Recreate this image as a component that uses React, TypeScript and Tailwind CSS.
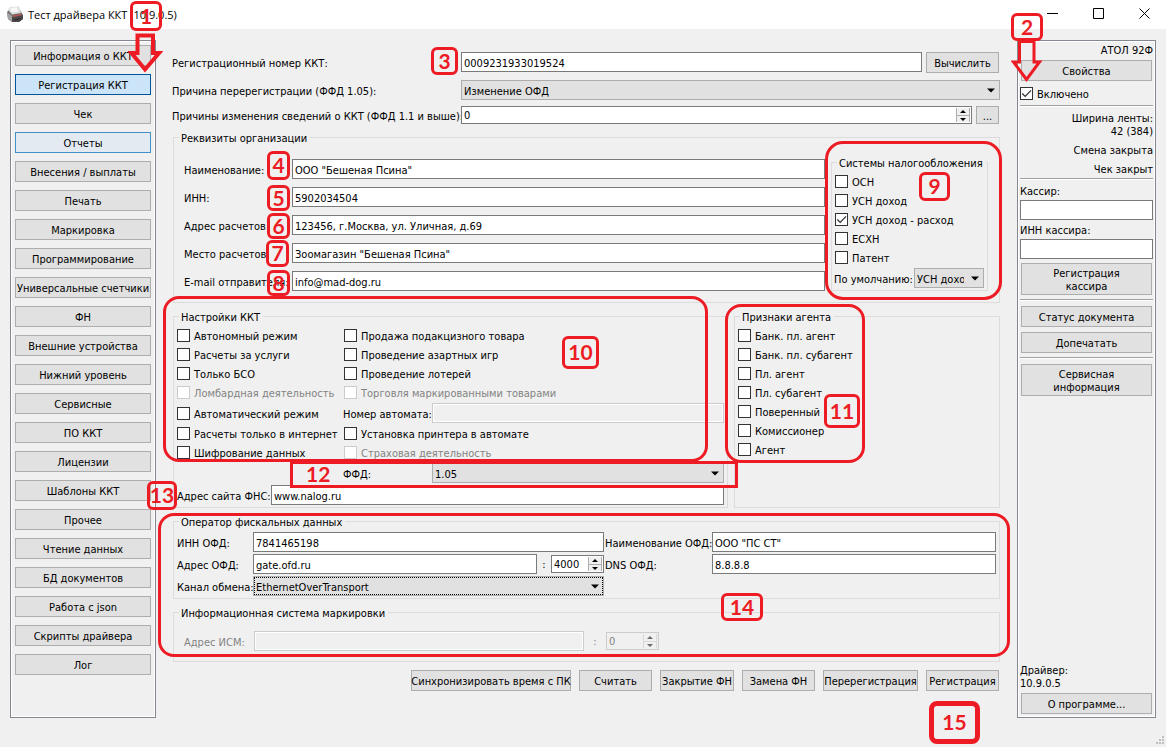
import React from 'react'
import clsx from 'clsx'

type BtnProps = { children: React.ReactNode; className?: string; tone?: 'plain' | 'active' | 'hover' }

function Btn({ children, className, tone = 'plain' }: BtnProps) {
  return (
    <button
      type="button"
      className={clsx(
        'flex shrink-0 items-center justify-center whitespace-nowrap border pt-[2px] text-center',
        tone === 'plain' && 'border-[#adadad] bg-[#e1e1e1]',
        tone === 'active' && 'border-[#005499] bg-[#cce4f7]',
        tone === 'hover' && 'border-[#4190c9] bg-[#e3eaf1]',
        className ?? 'h-[21px]',
      )}
    >
      {children}
    </button>
  )
}

function Field({ id, value = '', className, disabled }: { id: string; value?: string; className?: string; disabled?: boolean }) {
  return (
    <input
      id={id}
      type="text"
      defaultValue={value}
      disabled={disabled}
      className={clsx(
        'h-5 min-w-0 rounded-none border px-[2px] pt-[2px] outline-none',
        disabled
          ? 'border-[#cccccc] bg-[#f0f0f0] text-[#838383] shadow-[inset_0_0_0_1px_#ffffff]'
          : 'border-[#7a7a7a] bg-white',
        className,
      )}
    />
  )
}

function Drop({ id, value, className, focused, label }: { id: string; value: string; className?: string; focused?: boolean; label?: string }) {
  return (
    <span className={clsx('grid h-5 min-w-0 grid-cols-1', className)}>
      <select
        id={id}
        aria-label={label}
        className={clsx(
          'h-5 w-full min-w-0 appearance-none rounded-none border border-[#adadad] bg-[#e1e1e1] pl-[2px] pr-[19px] pt-[2px] [grid-area:1/1]',
          focused ? 'outline-1 -outline-offset-2 outline-dotted outline-black' : 'outline-none',
        )}
      >
        <option>{value}</option>
      </select>
      <svg
        className="pointer-events-none mr-[5px] self-center justify-self-end [grid-area:1/1]"
        width="8"
        height="5"
        viewBox="0 0 8 5"
      >
        <path d="M0 0.5h8L4 4.5z" fill="#000" />
      </svg>
    </span>
  )
}

function Spin({ id, value, className, disabled, label }: { id: string; value: string; className?: string; disabled?: boolean; label?: string }) {
  const arrow = disabled ? '#6d6d6d' : '#000'
  const stepper = disabled ? 'border-[#d9d9d9]' : 'border-[#adadad]'
  return (
    <span
      className={clsx(
        'flex h-[18px] min-w-0 border p-px',
        disabled ? 'border-[#cccccc] bg-[#f0f0f0] text-[#838383]' : 'border-[#7a7a7a] bg-white',
        className,
      )}
    >
      <input
        id={id}
        aria-label={label}
        inputMode="numeric"
        defaultValue={value}
        disabled={disabled}
        className="w-0 min-w-0 flex-1 bg-transparent pl-px pt-px outline-none"
      />
      <span className="flex w-[14px] shrink-0 flex-col">
        <button type="button" aria-label="Больше" disabled={disabled} className={clsx('flex h-[7px] items-center justify-center border-x bg-[#f0f0f0]', stepper)}>
          <svg width="6" height="3" viewBox="0 0 6 3"><path d="M0 3L3 0L6 3z" fill={arrow} /></svg>
        </button>
        <button type="button" aria-label="Меньше" disabled={disabled} className={clsx('flex h-[7px] items-center justify-center border-x border-t bg-[#f0f0f0]', stepper)}>
          <svg width="6" height="3" viewBox="0 0 6 3"><path d="M0 0L3 3L6 0z" fill={arrow} /></svg>
        </button>
      </span>
    </span>
  )
}

function Check({ label, checked, disabled, className }: { label: string; checked?: boolean; disabled?: boolean; className?: string }) {
  return (
    <label className={clsx('flex h-[13px] items-center gap-1 whitespace-nowrap', disabled && 'text-[#838383]', className)}>
      <span className="grid size-[13px] shrink-0">
        <input
          type="checkbox"
          defaultChecked={checked}
          disabled={disabled}
          className={clsx(
            'peer size-[13px] appearance-none border bg-white [grid-area:1/1]',
            disabled ? 'border-[#cccccc]' : 'border-[#333333]',
          )}
        />
        <svg className="pointer-events-none invisible [grid-area:1/1] peer-checked:visible" width="13" height="13" viewBox="0 0 13 13" fill="none">
          <path d="M2.3 6.5L5.2 9.4L11 3.4" stroke="#333" strokeWidth="1.3" />
        </svg>
      </span>
      <span className="pt-[2px]">{label}</span>
    </label>
  )
}

function Group({ title, className, children }: { title: string; className?: string; children: React.ReactNode }) {
  return (
    <fieldset className={clsx('min-w-0 border border-[#dcdcdc]', className)}>
      <legend className="ml-[5px] h-[13px] whitespace-nowrap pl-[2px] pr-[3px] leading-[15px]">{title}</legend>
      {children}
    </fieldset>
  )
}

const Rule = ({ className }: { className: string }) => (
  <div className={clsx('h-[2px] shrink-0 border-t border-[#a0a0a0] bg-white', className)} />
)

const MENU = [
  'Информация о ККТ', 'Регистрация ККТ', 'Чек', 'Отчеты', 'Внесения / выплаты', 'Печать', 'Маркировка',
  'Программирование', 'Универсальные счетчики', 'ФН', 'Внешние устройства', 'Нижний уровень', 'Сервисные',
  'ПО ККТ', 'Лицензии', 'Шаблоны ККТ', 'Прочее', 'Чтение данных', 'БД документов', 'Работа с json',
  'Скрипты драйвера', 'Лог',
]

const ORG = [
  ['org-name', 'Наименование:', 'ООО "Бешеная Псина"'],
  ['org-inn', 'ИНН:', '5902034504'],
  ['org-addr', 'Адрес расчетов:', '123456, г.Москва, ул. Уличная, д.69'],
  ['org-place', 'Место расчетов:', 'Зоомагазин "Бешеная Псина"'],
  ['org-mail', 'E-mail отправителя:', 'info@mad-dog.ru'],
]

const TAXES = ['ОСН', 'УСН доход', 'УСН доход - расход', 'ЕСХН', 'Патент']

const AGENTS = ['Банк. пл. агент', 'Банк. пл. субагент', 'Пл. агент', 'Пл. субагент', 'Поверенный', 'Комиссионер', 'Агент']

function PrinterIcon() {
  return (
    <svg width="18" height="18" viewBox="0 0 18 18" className="shrink-0">
      <path d="M1 6L4 3L14 4L17 9V13L13 16H6L2 13z" fill="#6f6c6d" />
      <path d="M1 6L6 10V16L2 13z" fill="#a3a1a2" />
      <path d="M6 11L17 9V13L13 16H6z" fill="#4a4748" />
      <path d="M2 4L4 1L13 0.5L15 7L6 8.5z" fill="#dcdcdc" />
      <path d="M4 2L11 1.2L12.5 5.5L5.5 6.3z" fill="#f6f6f6" />
      <path d="M7 9.5L15 8V9.4L7.4 11z" fill="#b5524f" />
      <path d="M8 13.5L15 12V13L8.4 14.6z" fill="#2e2b2c" />
    </svg>
  )
}

function TitleBar() {
  return (
    <header className="flex h-[29px] shrink-0 items-center bg-white pl-[6px] font-['Open_Sans','Noto_Sans',sans-serif] text-[11px]">
      <PrinterIcon />
      <h1 className="ml-1 flex-1">Тест драйвера ККТ (10.9.0.5)</h1>
      <div className="flex">
        {[
          ['Свернуть', 'M19 12.5h11'],
          ['Развернуть', 'M19.5 7.5h10v10h-10z'],
          ['Закрыть', 'M19.5 7.5l10 10M29.5 7.5l-10 10'],
        ].map(([name, d]) => (
          <button key={name} type="button" aria-label={name} className="h-[27px] w-[46px]">
            <svg width="46" height="27" viewBox="0 0 46 27" fill="none" stroke="#000"><path d={d} /></svg>
          </button>
        ))}
      </div>
    </header>
  )
}

function Registration() {
  return (
    <main className="ml-4 mr-[17px] flex min-w-0 flex-1 flex-col pt-3 [&_label[for]]:pt-[2px]">
      <div className="flex h-[21px]">
        <label htmlFor="reg-no" className="flex w-[289px] shrink-0 items-center">Регистрационный номер ККТ:</label>
        <Field id="reg-no" value="0009231933019524" className="flex-1" />
        <Btn className="ml-1 mr-px h-[21px] w-[73px]">Вычислить</Btn>
      </div>
      <div className="mt-[7px] flex">
        <label htmlFor="reason" className="flex w-[289px] shrink-0 items-center">Причина перерегистрации (ФФД 1.05):</label>
        <Drop id="reason" value="Изменение ОФД" className="flex-1" />
      </div>
      <div className="mt-[6px] flex">
        <label htmlFor="changes" className="flex w-[289px] shrink-0 items-center whitespace-nowrap">Причины изменения сведений о ККТ (ФФД 1.1 и выше):</label>
        <Spin id="changes" value="0" className="flex-1" />
        <Btn className="ml-1 mr-px h-[18px] w-[23px]">...</Btn>
      </div>

      <Group title="Реквизиты организации" className="ml-px mt-[7px]">
        <div className="flex gap-[6px] pb-[11px] pl-[10px] pr-[11px]">
          <div className="flex min-w-0 flex-1 flex-col gap-2 pt-[15px]">
            {ORG.map(([id, label, value]) => (
              <div key={id} className="flex h-5 items-center">
                <label htmlFor={id} className="w-[108px] shrink-0 whitespace-nowrap">{label}</label>
                <Field id={id} value={value} className="flex-1" />
              </div>
            ))}
          </div>
          <Group title="Системы налогообложения" className="mt-3 w-[157px]">
            <div className="flex flex-col gap-[6px] pl-[3px] pt-[6px]">
              {TAXES.map((t, i) => <Check key={t} label={t} checked={i === 2} />)}
            </div>
            <div className="mt-1 flex items-center pb-[2px] pl-[2px] pr-[3px]">
              <label htmlFor="tax-default" className="w-20 shrink-0 whitespace-nowrap">По умолчанию:</label>
              <Drop id="tax-default" value="УСН доход - расход" className="flex-1" />
            </div>
          </Group>
        </div>
      </Group>

      <div className="ml-px mt-[7px] flex gap-[6px]">
        <Group title="Настройки ККТ" className="flex-1">
          <div className="flex flex-col px-[3px] pt-[6px]">
            <div className="grid grid-cols-[167px_1fr] gap-y-[6px]">
              <Check label="Автономный режим" />
              <Check label="Продажа подакцизного товара" />
              <Check label="Расчеты за услуги" />
              <Check label="Проведение азартных игр" />
              <Check label="Только БСО" />
              <Check label="Проведение лотерей" />
              <Check label="Ломбардная деятельность" disabled />
              <Check label="Торговля маркированными товарами" disabled />
            </div>
            <div className="mt-1 flex h-5 items-center">
              <Check label="Автоматический режим" className="w-[166px]" />
              <label htmlFor="machine" className="w-[89px] shrink-0 whitespace-nowrap">Номер автомата:</label>
              <Field id="machine" disabled className="flex-1" />
            </div>
            <div className="mt-1 grid grid-cols-[167px_1fr] gap-y-[6px]">
              <Check label="Расчеты только в интернет" />
              <Check label="Установка принтера в автомате" />
              <Check label="Шифрование данных" />
              <Check label="Страховая деятельность" disabled />
            </div>
            <div className="mt-1 flex items-center pl-[166px]">
              <label htmlFor="ffd" className="w-[89px] shrink-0">ФФД:</label>
              <Drop id="ffd" value="1.05" className="flex-1" />
            </div>
            <div className="mb-[2px] mt-[2px] flex items-center">
              <label htmlFor="fns" className="w-[94px] shrink-0 whitespace-nowrap">Адрес сайта ФНС:</label>
              <Field id="fns" value="www.nalog.ru" className="flex-1" />
            </div>
          </div>
        </Group>
        <Group title="Признаки агента" className="w-[266px]">
          <div className="flex flex-col gap-[6px] pl-[3px] pt-[6px]">
            {AGENTS.map((a) => <Check key={a} label={a} />)}
          </div>
        </Group>
      </div>

      <Group title="Оператор фискальных данных" className="ml-px mt-[7px]">
        <div className="flex px-[3px] pb-[2px] pt-1">
          <div className="grid min-w-0 flex-[427] grid-cols-[76px_1fr] items-center gap-y-[2px]">
            <label htmlFor="ofd-inn">ИНН ОФД:</label>
            <Field id="ofd-inn" value="7841465198" />
            <label htmlFor="ofd-addr">Адрес ОФД:</label>
            <div className="flex items-center">
              <Field id="ofd-addr" value="gate.ofd.ru" className="flex-1" />
              <span className="w-[14px] text-center">:</span>
              <Spin id="ofd-port" label="Порт ОФД" value="4000" className="w-[53px]" />
            </div>
            <label htmlFor="channel" className="whitespace-nowrap">Канал обмена:</label>
            <Drop id="channel" value="EthernetOverTransport" focused />
          </div>
          <div className="ml-px grid min-w-0 flex-[391] grid-cols-[107px_1fr] content-start items-center gap-y-[2px]">
            <label htmlFor="ofd-name" className="whitespace-nowrap">Наименование ОФД:</label>
            <Field id="ofd-name" value={'ООО "ПС СТ"'} />
            <label htmlFor="ofd-dns">DNS ОФД:</label>
            <Field id="ofd-dns" value="8.8.8.8" />
          </div>
        </div>
      </Group>

      <Group title="Информационная система маркировки" className="ml-px mt-[7px]">
        <div className="flex items-center pb-[10px] pl-[10px] pt-3 text-[#838383]">
          <label htmlFor="ism" className="w-[70px] shrink-0 whitespace-nowrap">Адрес ИСМ:</label>
          <Field id="ism" disabled className="w-[330px]" />
          <span className="w-[22px] text-center">:</span>
          <Spin id="ism-port" label="Порт ИСМ" value="0" disabled className="w-[53px]" />
        </div>
      </Group>

      <div className="mr-px mt-2 flex justify-end gap-2">
        <Btn className="h-[21px] w-40">Синхронизировать время с ПК</Btn>
        <Btn className="h-[21px] w-[73px]">Считать</Btn>
        <Btn className="h-[21px] w-[74px]">Закрытие ФН</Btn>
        <Btn className="h-[21px] w-[73px]">Замена ФН</Btn>
        <Btn className="h-[21px] w-[95px]">Перерегистрация</Btn>
        <Btn className="h-[21px] w-[73px]">Регистрация</Btn>
      </div>
    </main>
  )
}

function Status() {
  return (
    <aside className="flex w-[139px] shrink-0 flex-col border border-[#828790] px-[2px] pb-[3px] pt-[3px] shadow-[inset_0_0_0_1px_#ffffff]">
      <p className="text-right">АТОЛ 92Ф</p>
      <Btn className="mx-px mt-[3px] h-[21px]">Свойства</Btn>
      <Check label="Включено" checked className="mt-[6px]" />
      <Rule className="mt-[5px]" />
      <p className="mt-[5px] text-right">Ширина ленты:<br />42 (384)</p>
      <p className="mt-[6px] text-right">Смена закрыта</p>
      <p className="mt-[6px] text-right">Чек закрыт</p>
      <Rule className="mt-[2px]" />
      <label htmlFor="cashier" className="mt-[5px]">Кассир:</label>
      <Field id="cashier" className="mt-[2px]" />
      <label htmlFor="cashier-inn" className="mt-1">ИНН кассира:</label>
      <Field id="cashier-inn" className="mt-[2px]" />
      <Btn className="mx-px mt-1 h-8">Регистрация<br />кассира</Btn>
      <Rule className="mt-1" />
      <Btn className="mx-px mt-[5px] h-[21px]">Статус документа</Btn>
      <Btn className="mx-px mt-[5px] h-[21px]">Допечатать</Btn>
      <Rule className="mt-1" />
      <Btn className="mx-px mt-[5px] h-8">Сервисная<br />информация</Btn>
      <p className="mt-auto">Драйвер:<br />10.9.0.5</p>
      <Btn className="mx-px mt-[3px] h-[21px]">О программе...</Btn>
    </aside>
  )
}

const BADGES: [string, string][] = [
  ['1', 'left-[130px] top-[1px] h-[30px] w-[32px]'],
  ['2', 'left-[1011px] top-[13px] h-[28px] w-[32px]'],
  ['3', 'left-[431px] top-[47px] h-[28px] w-[27px]'],
  ['4', 'left-[267px] top-[151px] h-[29px] w-[23px]'],
  ['5', 'left-[267px] top-[185px] h-[26px] w-[23px]'],
  ['6', 'left-[267px] top-[213px] h-[26px] w-[23px]'],
  ['7', 'left-[266px] top-[240px] h-[27px] w-[23px]'],
  ['8', 'left-[267px] top-[270px] h-[26px] w-[23px]'],
  ['9', 'left-[919px] top-[172px] h-[29px] w-[31px]'],
  ['10', 'left-[562px] top-[336px] h-[33px] w-[37px]'],
  ['11', 'left-[824px] top-[394px] h-[34px] w-[36px]'],
  ['13', 'left-[147px] top-[481px] h-[29px] w-[30px]'],
  ['14', 'left-[721px] top-[593px] h-[28px] w-[42px]'],
]

function Annotations() {
  return (
    <div className="pointer-events-none absolute inset-0 overflow-hidden font-['Lato',sans-serif] text-[21px] font-bold leading-none text-[#ed1c24]">
      <div className="absolute left-[163px] top-[296px] h-[166px] w-[545px] rounded-[16px] border-[3px] border-[#ed1c24]" />
      <div className="absolute left-[725px] top-[304px] h-[159px] w-[140px] rounded-[16px] border-[3px] border-[#ed1c24]" />
      <div className="absolute left-[825px] top-[141px] h-[159px] w-[177px] rounded-[18px] border-[3px] border-[#ed1c24]" />
      <div className="absolute left-[158px] top-[513px] h-[144px] w-[852px] rounded-[16px] border-[3px] border-[#ed1c24]" />
      <div className="absolute left-[290px] top-[461px] flex h-[27px] w-[448px] items-center border-[3px] border-[#ed1c24] pb-[2px] pl-[13px]">12</div>
      {BADGES.map(([n, place]) => (
        <div key={n} className={clsx('absolute flex items-center justify-center rounded-[6px] border-[3px] border-[#ed1c24] pb-[2px]', place)}>{n}</div>
      ))}
      <div className="absolute left-[929px] top-[701px] flex h-[43px] w-[51px] items-center justify-center rounded-[8px] border-[5px] border-[#ed1c24] pb-[3px]">15</div>
      <svg className="absolute left-[128px] top-[32px]" width="35" height="42" viewBox="0 0 35 42" fill="none" stroke="#ed1c24" strokeWidth="4">
        <path d="M9.5 3.5H25V21H31L17 37.5L3.5 21H9.5z" />
      </svg>
      <svg className="absolute left-[1011px] top-[38px]" width="32" height="46" viewBox="0 0 32 46" fill="none" stroke="#ed1c24" strokeWidth="3">
        <path d="M8.5 3.5H23V24H28.5L15.5 41.5L2.5 24H8.5z" />
      </svg>
    </div>
  )
}

export default function App() {
  return (
    <div className="relative flex min-h-screen flex-col bg-[#f0f0f0] font-['DejaVu_Sans_Condensed','DejaVu_Sans',sans-serif] text-[11px] leading-[13px] text-black">
      <TitleBar />
      <div className="flex flex-1 px-[10px] pb-[29px] pt-[11px]">
        <nav className="flex w-[146px] shrink-0 flex-col gap-2 border border-[#828790] p-1 shadow-[inset_0_0_0_1px_#ffffff]">
          {MENU.map((m, i) => (
            <Btn key={m} tone={i === 1 ? 'active' : i === 3 ? 'hover' : 'plain'}>{m}</Btn>
          ))}
        </nav>
        <Registration />
        <Status />
      </div>
      <svg className="absolute bottom-0 right-0" width="12" height="12" viewBox="0 0 12 12" fill="#bfbfbf">
        <path d="M8 1h2v2h-2zM5 4h2v2h-2zM8 4h2v2h-2zM2 7h2v2h-2zM5 7h2v2h-2zM8 7h2v2h-2z" />
      </svg>
      <Annotations />
    </div>
  )
}
